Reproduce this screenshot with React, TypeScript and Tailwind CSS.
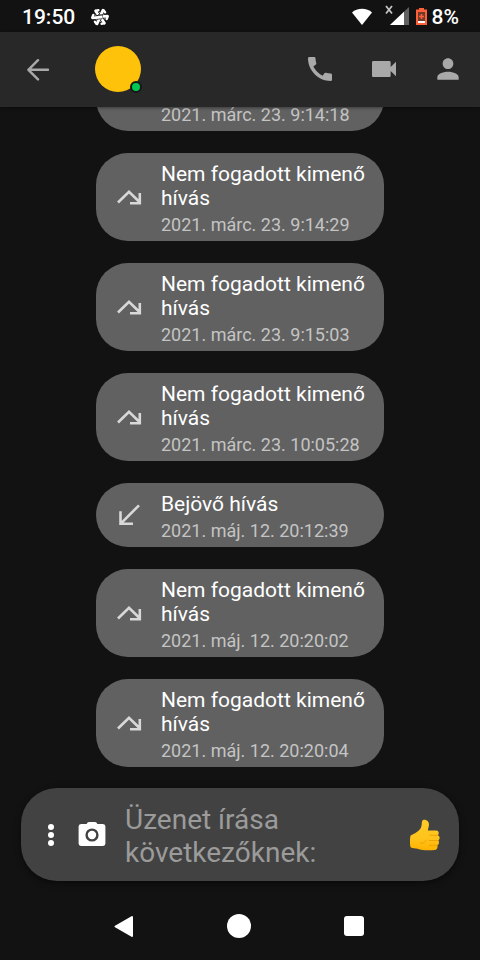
import React from "react";
import { MdCall, MdVideocam, MdPerson } from "react-icons/md";

type Call = { id: number; kind: "missed" | "incoming"; date: string };

const calls: Call[] = [
  { id: 1, kind: "missed", date: "2021. márc. 23. 9:14:18" },
  { id: 2, kind: "missed", date: "2021. márc. 23. 9:14:29" },
  { id: 3, kind: "missed", date: "2021. márc. 23. 9:15:03" },
  { id: 4, kind: "missed", date: "2021. márc. 23. 10:05:28" },
  { id: 5, kind: "incoming", date: "2021. máj. 12. 20:12:39" },
  { id: 6, kind: "missed", date: "2021. máj. 12. 20:20:02" },
  { id: 7, kind: "missed", date: "2021. máj. 12. 20:20:04" },
];

function StatusBar() {
  return (
    <div className="flex h-8 shrink-0 items-center pl-[22px] pr-[21px] pt-px text-[21px] leading-8 font-medium text-white">
      <span>19:50</span>
      <svg className="ml-4 size-[18px]" viewBox="0 0 18 18" fill="none" aria-hidden="true">
        <circle cx="9" cy="9" r="5" fill="#fff" />
        {[0, 60, 120, 180, 240, 300].map((a) => (
          <g key={a} transform={`rotate(${a} 9 9)`} strokeLinecap="round">
            <path d="M4.6 3 L9.4 10" stroke="#121212" strokeWidth="4" />
            <path d="M4.6 3 L9.6 10.2" stroke="#fff" strokeWidth="2.8" />
            <path d="M5 2.6 L7.4 2.2" stroke="#fff" strokeWidth="2.4" />
          </g>
        ))}
      </svg>
      <div className="ml-auto flex items-center">
        <svg className="h-[18px] w-[22px]" viewBox="0 0 22 18" aria-hidden="true">
          <path d="M1 4.5 C6 -0.5 16 -0.5 21 4.5 L11 17Z" fill="#fff" />
        </svg>
        <svg className="ml-[11px] h-6 w-[26px]" viewBox="0 0 26 24" aria-hidden="true">
          <path d="M6 20 L25 2 V20Z" fill="#616161" />
          <path d="M6 20 L20 6.8 V20Z" fill="#fff" />
          <path d="M2 1 L8 8.5 M8 1 L2 8.5" stroke="#c4c4c4" strokeWidth="1.8" />
        </svg>
        <svg className="ml-[6px] h-[18px] w-[11px]" viewBox="0 0 11 18" aria-hidden="true">
          <path d="M3 0 H8 V1.6 H11 V17 H0 V1.6 H3Z" fill="#ff6037" />
          <path d="M2 4 H9 V13 H2Z" fill="#6d3b2c" />
          <path d="M5.5 6 V11 M3 8.5 H8" stroke="#ff6037" strokeWidth="1.6" />
          <path d="M2 13 H9 V15 H2Z" fill="#fff" />
        </svg>
        <span className="ml-[5px]">8%</span>
      </div>
    </div>
  );
}

function Header() {
  return (
    <header className="relative z-10 flex h-[75px] shrink-0 items-center bg-[#282828] pb-px text-[#a9a9a9] shadow-[0_1px_3px_rgba(0,0,0,0.4)]">
      <button type="button" aria-label="Vissza" className="flex h-16 w-[76px] items-center justify-center">
        <svg className="size-6" viewBox="0 0 24 24" fill="none" stroke="currentColor" strokeWidth="2.4" strokeLinecap="round" strokeLinejoin="round" aria-hidden="true">
          <path d="M12 3.2 L2.4 12.8 L12 22.4 M2.4 12.8 H22" />
        </svg>
      </button>
      <div className="relative ml-[19px] size-[46px] rounded-full bg-[#ffc20a]">
        <span className="absolute -right-px -bottom-px size-3 rounded-full border-2 border-[#171717] bg-[#00c853]" />
      </div>
      <div className="ml-auto flex">
        <button type="button" aria-label="Hanghívás" className="flex h-16 w-16 items-center justify-center">
          <MdCall size={32} />
        </button>
        <button type="button" aria-label="Videohívás" className="flex h-16 w-16 items-center justify-center">
          <MdVideocam size={32} />
        </button>
        <button type="button" aria-label="Profil" className="flex h-16 w-16 items-center justify-center">
          <MdPerson size={32} />
        </button>
      </div>
    </header>
  );
}

function CallIcon({ kind }: { kind: Call["kind"] }) {
  return (
    <svg className="size-8 shrink-0" viewBox="0 0 32 32" fill="none" stroke="#d8d8d8" strokeWidth="2.6" aria-hidden="true">
      {kind === "missed" ? (
        <path d="M5 19.5 L16 8.8 L26.5 19 M26.8 10 V20.2 H17" />
      ) : (
        <path d="M26 4.3 L8.5 21.8 M7.5 10.3 V22.8 H20" />
      )}
    </svg>
  );
}

function CallBubble({ call }: { call: Call }) {
  return (
    <li className="flex w-3/5 shrink-0 items-center rounded-[32px] bg-[#616161] pt-[9px] pb-[6px] pl-[17px] pr-3">
      <CallIcon kind={call.kind} />
      <div className="ml-4">
        <p className="text-[21px] leading-6 text-white">
          {call.kind === "missed" ? "Nem fogadott kimenő hívás" : "Bejövő hívás"}
        </p>
        <p className="pt-[5px] text-[18px] leading-5 whitespace-nowrap text-[#c4c4c4]">{call.date}</p>
      </div>
    </li>
  );
}

function ThumbsUp() {
  return (
    <svg className="size-8" viewBox="0 0 32 32" aria-hidden="true">
      <defs>
        <linearGradient id="skin" x1="0" y1="0" x2="0" y2="1">
          <stop offset="0" stopColor="#ffca28" />
          <stop offset="0.6" stopColor="#ffc41c" />
          <stop offset="1" stopColor="#ffb300" />
        </linearGradient>
      </defs>
      <path
        d="M1.6 16.5 C5.5 15 10 12.5 12 8.6 C13 6.4 12.6 3.6 13.2 1.8 C14 0 17.4 .4 19 2.4 C21 5 19.4 8.6 18.8 11.4 H27.2 C30 11.4 30.4 14.8 28.8 16.2 C31.2 17 31.2 20.3 29.2 21.4 C30.6 22.6 30.2 25.6 28.2 26.2 C29.2 28.2 28 31 25.6 31 C19.6 31.6 13 31.4 8.6 29.8 C6.4 29 3.6 29.6 1.6 28.2 C.8 26 .8 19 1.6 16.5Z"
        fill="url(#skin)"
      />
      <path
        d="M28.8 16.3 H20.6 M29.2 21.5 H20 M28.2 26.3 H20.4 M11.5 24.2 C14.5 24.4 16.4 23 17.2 21.2"
        fill="none"
        stroke="#f09a00"
        strokeWidth="0.8"
        strokeLinecap="round"
      />
    </svg>
  );
}

function Composer() {
  return (
    <form className="mx-[21px] mt-[21px] flex h-[93px] shrink-0 items-center rounded-[36px] bg-[#424242] pl-4 pr-[18px] shadow-[0_2px_6px_rgba(0,0,0,0.5)]">
      <button type="button" aria-label="További lehetőségek" className="flex h-12 w-7 items-center justify-center">
        <svg className="h-6 w-2" viewBox="0 0 8 24" fill="#fff" aria-hidden="true">
          <circle cx="4" cy="4" r="3" />
          <circle cx="4" cy="12" r="3" />
          <circle cx="4" cy="20" r="3" />
        </svg>
      </button>
      <button type="button" aria-label="Fénykép" className="ml-[11px] flex h-12 w-8 items-center justify-center pb-px">
        <svg className="h-6 w-7" viewBox="0 0 28 24" aria-hidden="true">
          <path d="M8.6 2 Q9.4 0 11 0 H17 Q18.6 0 19.4 2 H25 Q27.4 2.2 27.4 4.6 V21.6 Q27.4 24 25 24 H3 Q.6 24 .6 21.6 V4.6 Q.6 2.2 3 2Z" fill="#fff" />
          <circle cx="14" cy="13" r="5.4" fill="#fff" stroke="#424242" strokeWidth="2.4" />
        </svg>
      </button>
      <textarea
        rows={2}
        aria-label="Üzenet"
        placeholder="Üzenet írása következőknek:"
        className="ml-[17px] h-[68px] min-w-0 flex-1 resize-none overflow-hidden pt-[2px] pr-14 text-[28px] leading-[33px] text-white outline-none placeholder:text-[#9b9b9b]"
      />
      <button type="button" aria-label="Tetszik" className="flex h-12 w-8 items-center justify-center">
        <ThumbsUp />
      </button>
    </form>
  );
}

function NavBar() {
  return (
    <nav className="flex h-[79px] shrink-0 items-center justify-center gap-[67px] pt-[11px] pr-[2px]">
      <button type="button" aria-label="Vissza" className="flex size-12 items-center justify-center">
        <svg className="size-6" viewBox="0 0 24 24" aria-hidden="true">
          <path d="M20 3 V22 L3.5 12.5Z" fill="#fff" stroke="#fff" strokeWidth="2" strokeLinejoin="round" />
        </svg>
      </button>
      <button type="button" aria-label="Kezdőképernyő" className="flex size-12 items-center justify-center">
        <span className="size-6 rounded-full bg-white" />
      </button>
      <button type="button" aria-label="Áttekintés" className="flex size-12 items-center justify-center">
        <span className="size-5 rounded-[3px] bg-white" />
      </button>
    </nav>
  );
}

export default function App() {
  return (
    <div className="flex h-screen flex-col overflow-hidden bg-[#121212] font-[Roboto,sans-serif]">
      <StatusBar />
      <Header />
      <ul className="flex min-h-0 flex-1 flex-col items-center justify-end gap-[22px] overflow-hidden">
        {calls.map((call) => (
          <CallBubble key={call.id} call={call} />
        ))}
      </ul>
      <Composer />
      <NavBar />
    </div>
  );
}
